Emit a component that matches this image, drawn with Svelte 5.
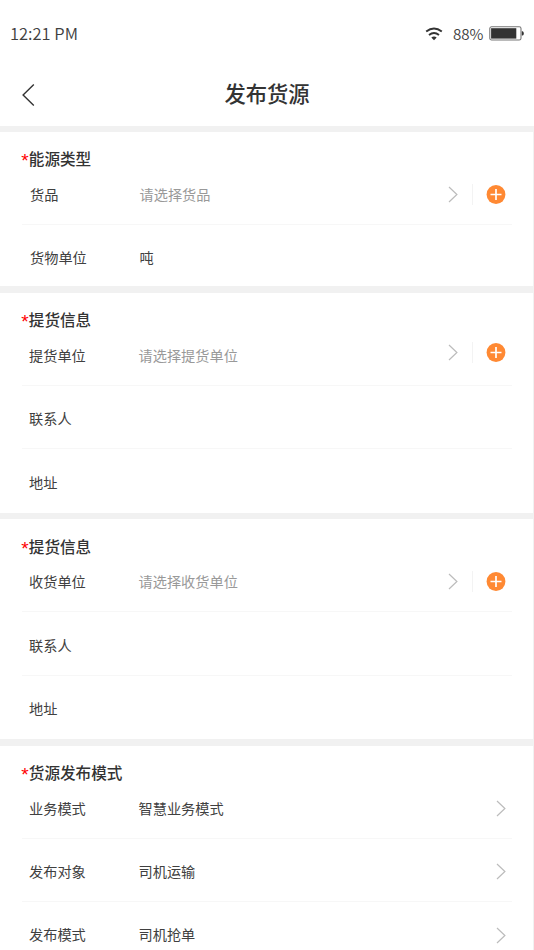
<!-- App.svelte -->
<script lang="ts">
  type Row = {
    label: string
    value?: string
    placeholder?: string
    arrow?: boolean
    add?: boolean
    shift?: string
  }
  type Section = { title: string; kind: string; rows: Row[] }

  const sections: Section[] = [
    {
      title: '能源类型',
      kind: 'energy',
      rows: [
        { label: '货品', placeholder: '请选择货品', arrow: true, add: true },
        { label: '货物单位', value: '吨' },
      ],
    },
    {
      title: '提货信息',
      kind: 'pickup',
      rows: [
        { label: '提货单位', placeholder: '请选择提货单位', arrow: true, add: true, shift: 'up' },
        { label: '联系人' },
        { label: '地址' },
      ],
    },
    {
      title: '提货信息',
      kind: 'receive',
      rows: [
        { label: '收货单位', placeholder: '请选择收货单位', arrow: true, add: true },
        { label: '联系人' },
        { label: '地址' },
      ],
    },
    {
      title: '货源发布模式',
      kind: 'mode',
      rows: [
        { label: '业务模式', value: '智慧业务模式', arrow: true },
        { label: '发布对象', value: '司机运输', arrow: true },
        { label: '发布模式', value: '司机抢单', arrow: true, shift: 'down' },
      ],
    },
  ]
</script>

<div class="screen">
  <header>
    <div class="status">
      <span class="time">12:21 PM</span>
      <svg class="wifi" width="18" height="14" viewBox="0 0 18 14">
        <path d="M1.2 4.6Q9 -1.6 16.8 4.6M4 8Q9 4 14 8" fill="none" stroke="#333" stroke-width="1.9" />
        <path d="M6.3 10.4Q9 8.6 11.7 10.4L9 13.2Z" fill="#333" />
      </svg>
      <span class="percent">88%</span>
      <svg class="battery" width="35" height="15" viewBox="0 0 35 15">
        <rect x="0.8" y="0.8" width="31.2" height="13.2" rx="1.8" fill="#fff" stroke="#777" stroke-width="1.1" />
        <rect x="2.1" y="2.2" width="25.2" height="10.4" fill="#333" />
        <path d="M32.8 5.2h.8q1.2 .4 1.2 2.2t-1.2 2.2h-.8z" fill="#333" />
      </svg>
    </div>
    <div class="navbar">
      <svg class="back" width="14" height="24" viewBox="0 0 14 24">
        <path d="M12.8 1.4L2.1 12L12.8 22.6" fill="none" stroke="#333" stroke-width="1.4" />
      </svg>
      <h1>发布货源</h1>
    </div>
  </header>

  <main>
    {#each sections as section}
      <section class={section.kind}>
        <h2><span class="star">*</span>{section.title}</h2>
        {#each section.rows as row}
          <div class="row">
            <span class="label">{row.label}</span>
            <span class="value" class:placeholder={row.placeholder}>{row.value ?? row.placeholder ?? ''}</span>
            <span class="actions {row.shift ?? ''}">
              {#if row.arrow}
                <svg width="10" height="17" viewBox="0 0 10 17">
                  <path d="M1 1L8.9 8.5L1 16" fill="none" stroke="#bcbcbc" stroke-width="1.2" />
                </svg>
              {/if}
              {#if row.add}
                <span class="split"></span>
                <svg width="20" height="19" viewBox="0 0 20 19">
                  <circle cx="10" cy="9.5" r="9.4" fill="#ff8933" />
                  <path d="M10 4v11M4.5 9.5h11" stroke="#fff" stroke-width="1.7" />
                </svg>
              {/if}
            </span>
          </div>
        {/each}
      </section>
    {/each}
  </main>
</div>

<style>
  :global(body) { margin: 0; overflow: hidden; }
  .screen  { width: 534px; height: 950px; overflow: hidden; background: #fff; color: #404040; font-family: "Noto Sans CJK SC", sans-serif; }
  header   { height: 125.5px; }
  .status  { display: flex; align-items: center; height: 67px; padding: 0 10.5px 0 10px; font-size: 16.5px; line-height: 24px; box-sizing: border-box; }
  .time    { flex: 1; font-weight: 350; padding-bottom: 2px; }
  .wifi    { margin-right: 10px; }
  .percent { font-size: 15.2px; font-weight: 350; margin-right: 5px; padding-bottom: 1px; }
  .navbar  { display: grid; grid-template-columns: 80px 1fr 80px; align-items: center; height: 55px; }
  .back    { margin-left: 21px; }
  h1       { margin: 0; padding-bottom: 3px; color: #333; font-size: 21.3px; font-weight: 500; line-height: 30px; text-align: center; }

  main     { display: grid; gap: 6.7px; padding: 6.7px 1px 0 0; background: #f1f1f1; }
  section  { padding: 0 21px 0 22px; background: #fff; }
  h2       { display: flex; height: 38.8px; margin: 0; padding-top: 15.2px; color: #333; font-size: 15.6px; font-weight: 500; line-height: 23.2px; box-sizing: border-box; }
  .star    { flex: none; width: 7.6px; margin: 2px 0 0 -0.8px; color: #f00; font-family: "Liberation Sans", sans-serif; font-size: 19px; font-weight: 400; }
  .row     { display: flex; height: 63.4px; padding: 22.4px 6px 0 7px; box-sizing: border-box; border-bottom: 1px solid #f7f7f7; font-size: 14.2px; line-height: 21px; }
  h2 + .row { height: 54.1px; padding-top: 13.1px; }
  .row:last-child { border-bottom: none; }
  .label   { width: 109.5px; }
  .value   { flex: 1; }
  .placeholder { color: #999; }
  .actions { display: flex; align-items: center; height: 21px; }
  .split   { width: 1px; height: 21px; margin: 0 13px 0 14px; background: #f3f3f3; }
  .up      { margin-top: -3px; }
  .down    { margin-top: 1px; }

  .energy .row { padding-left: 8px; }
  .energy .row:last-child { height: 61.2px; }
</style>
